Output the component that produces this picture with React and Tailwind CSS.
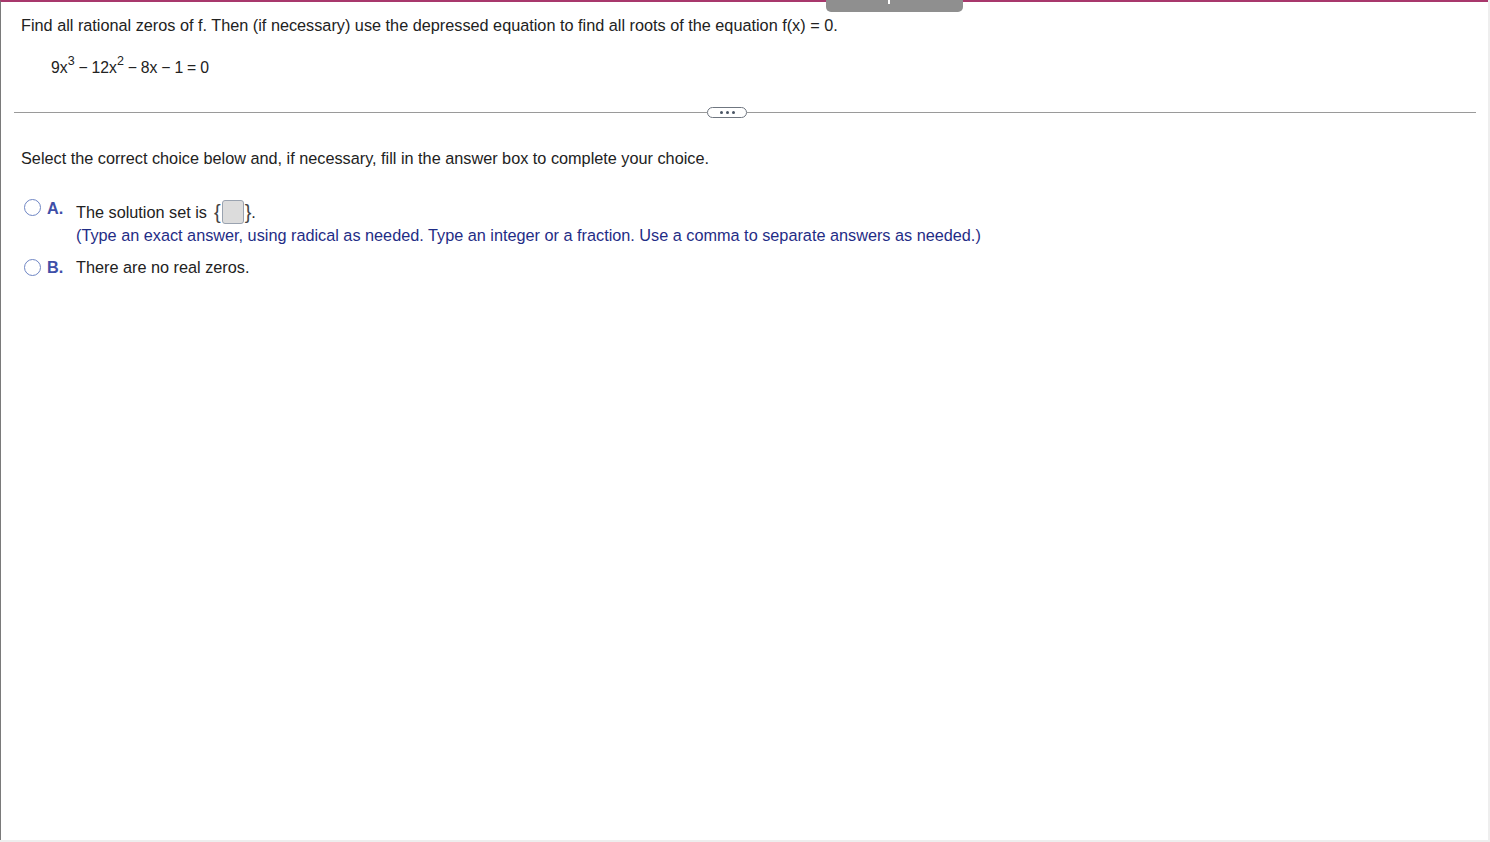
export default function App() {
  return (
    <div
      className="relative h-[842px] w-[1490px] overflow-hidden bg-white text-[16.25px] text-[#222]"
      style={{ fontFamily: '"Liberation Sans", Arial, sans-serif' }}
    >
      <div className="flex h-[840px] w-[1488px] flex-col border-l border-t-2 border-l-[#7a7a7a] border-t-[#a8386c]">
        <div className="absolute left-[826px] top-0 h-[12px] w-[137px] rounded-b-[5px] bg-[#8f8f8f]">
          <div className="absolute left-[62px] top-0 h-[4px] w-[2px] bg-white"></div>
        </div>

        <div className="pl-[20px] pt-[13px] leading-[20px]">
          Find all rational zeros of f. Then (if necessary) use the depressed equation to find all roots of the equation f(x) = 0.
        </div>

        <div className="pl-[50px] pt-[23px] text-[15.75px] leading-[20px] [word-spacing:-0.5px]">
          9x<sup className="relative -top-[8px] align-baseline text-[12.5px]">3</sup> − 12x
          <sup className="relative -top-[8px] align-baseline text-[12.5px]">2</sup> − 8x − 1 = 0
        </div>

        <div className="relative ml-[13px] mt-[29px] flex w-[1462px] items-center">
          <div className="h-px w-[693px] bg-[#9a9a9a]"></div>
          <div className="flex h-[11px] w-[40px] items-center justify-center gap-[3px] rounded-full border border-[#6f7680] bg-white">
            <span className="h-[3px] w-[3px] rounded-full bg-[#4a5564]"></span>
            <span className="h-[3px] w-[3px] rounded-full bg-[#4a5564]"></span>
            <span className="h-[3px] w-[3px] rounded-full bg-[#4a5564]"></span>
          </div>
          <div className="h-px flex-1 bg-[#9a9a9a]"></div>
        </div>

        <div className="pl-[20px] pt-[30px] leading-[20px]">
          Select the correct choice below and, if necessary, fill in the answer box to complete your choice.
        </div>

        <div className="flex pl-[23px] pt-[32px]">
          <div className="mt-[-1px] h-[17px] w-[17px] rounded-full border-[1.5px] border-[#6f86c4]"></div>
          <div className="ml-[6px] w-[29px] font-bold leading-[16px] text-[#3f4fa8]">A.</div>
          <div className="flex flex-col">
            <div className="flex items-center leading-[20px]">
              <span>The solution set is</span>
              <span className="ml-[7px] text-[20px] leading-[20px] text-[#444]">{"{"}</span>
              <span className="mx-[1px] h-[24px] w-[22px] rounded-[3px] border border-[#9aa3b0] bg-[#dcdcdc]"></span>
              <span className="text-[20px] leading-[20px] text-[#444]">{"}"}</span>
              <span>.</span>
            </div>
            <div className="mt-[1px] leading-[20px] text-[#1f2d86]">
              (Type an exact answer, using radical as needed. Type an integer or a fraction. Use a comma to separate answers as needed.)
            </div>
          </div>
        </div>

        <div className="flex items-center pl-[23px] pt-[12px]">
          <div className="h-[17px] w-[17px] rounded-full border-[1.5px] border-[#6f86c4]"></div>
          <div className="ml-[6px] w-[29px] font-bold leading-[20px] text-[#3f4fa8]">B.</div>
          <div className="leading-[20px]">There are no real zeros.</div>
        </div>
      </div>
      <div className="absolute right-0 top-0 h-full w-[2px] bg-[#eeeeee]"></div>
      <div className="absolute bottom-0 left-0 h-[2px] w-full bg-[#eeeeee]"></div>
    </div>
  );
}
